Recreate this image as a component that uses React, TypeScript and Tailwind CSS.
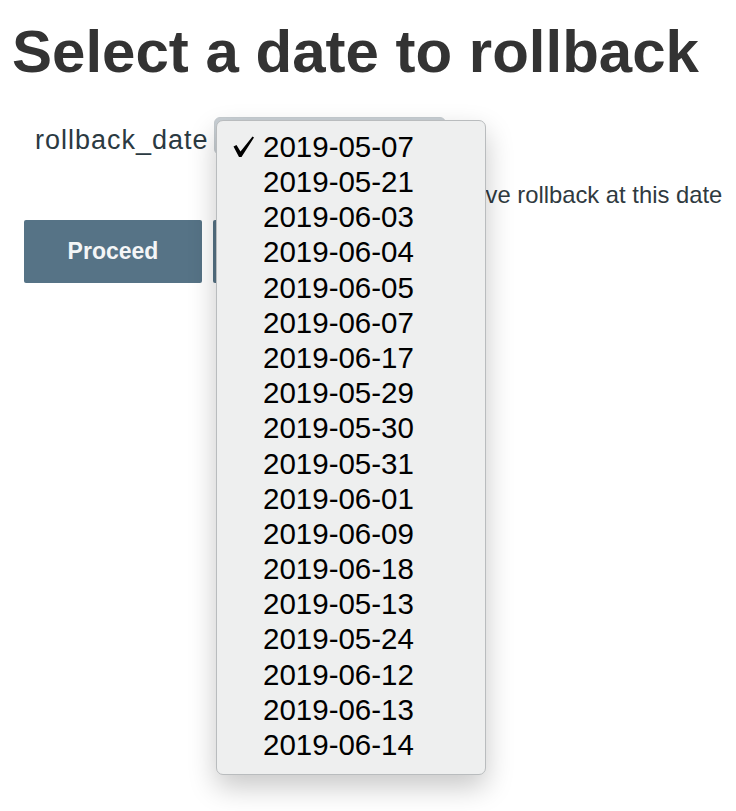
const dates = [
  "2019-05-07",
  "2019-05-21",
  "2019-06-03",
  "2019-06-04",
  "2019-06-05",
  "2019-06-07",
  "2019-06-17",
  "2019-05-29",
  "2019-05-30",
  "2019-05-31",
  "2019-06-01",
  "2019-06-09",
  "2019-06-18",
  "2019-05-13",
  "2019-05-24",
  "2019-06-12",
  "2019-06-13",
  "2019-06-14",
];

function CheckMark() {
  return (
    <svg width="22" height="22" viewBox="0 0 22 22" className="shrink-0">
      <path d="M0.5 10.5 L3.5 9 L7.5 15.5 L19.5 0.5 L21 1.5 L8.5 21 L6 21 Z" fill="#000" />
    </svg>
  );
}

function DatePopup() {
  return (
    <div className="absolute left-[216px] top-[120px] w-[270px] h-[655px] rounded-[7px] border border-[#b9bcbe] bg-[#eeefef] pt-[8px] shadow-[0_12px_28px_rgba(0,0,0,0.22)]">
      {dates.map((d, i) => (
        <div key={d} className="flex h-[35.2px] items-center pl-[16px]">
          <div className="w-[30px]">{i === 0 && <CheckMark />}</div>
          <span className="text-[29.5px] leading-none text-black">{d}</span>
        </div>
      ))}
    </div>
  );
}

export default function App() {
  return (
    <div className="relative min-h-[811px] bg-white font-['Liberation_Sans',Arial,sans-serif]">
      <h1 className="pl-[12px] pt-[22px] text-[60px] font-bold leading-none text-[#333333]">
        Select a date to rollback
      </h1>

      <div className="mt-[35px] flex pl-[35px]">
        <label className="pt-[10px] text-[27px] leading-none tracking-[1px] text-[#2b3a42]">
          rollback_date
        </label>
        <div className="ml-[5px] flex flex-col">
          <div className="h-[38px] w-[232px] rounded-[6px] border border-[#c6ccd0] bg-[#c9d0d5]" />
          <p className="mt-[28px] whitespace-nowrap pl-[6px] text-[23.8px] leading-none text-[#2f3a40]">
            Date you would like to have rollback at this date
          </p>
        </div>
      </div>

      <div className="mt-[13px] flex gap-[11px] pl-[24px]">
        <button className="h-[63px] w-[178px] rounded-[2px] bg-[#567386] text-[23px] font-bold text-[#f4f6f7]">
          Proceed
        </button>
        <button className="h-[63px] w-[178px] rounded-[2px] bg-[#567386] text-[23px] font-bold text-[#f4f6f7]">
          Cancel
        </button>
      </div>

      <DatePopup />
    </div>
  );
}
